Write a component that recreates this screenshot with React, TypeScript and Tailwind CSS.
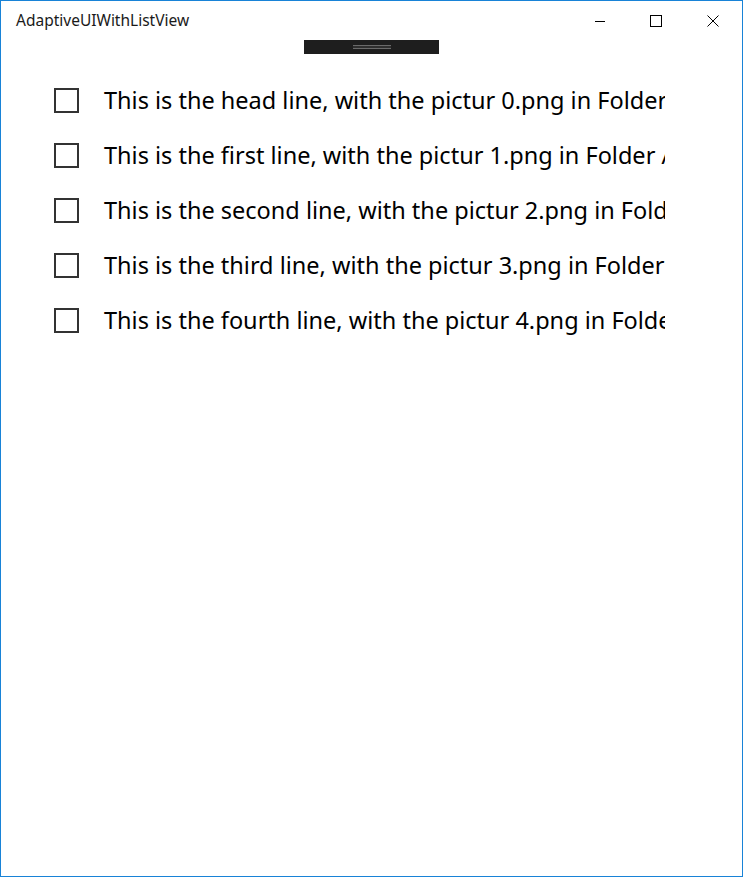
const rows = [
  "This is the head line, with the pictur 0.png in Folder Assets",
  "This is the first line, with the pictur 1.png in Folder Assets",
  "This is the second line, with the pictur 2.png in Folder Assets",
  "This is the third line, with the pictur 3.png in Folder Assets",
  "This is the fourth line, with the pictur 4.png in Folder Assets",
];

export default function App() {
  return (
    <div
      className="w-[743px] h-[877px] border border-[#1883d7] bg-white flex flex-col overflow-hidden"
      style={{ fontFamily: '"Noto Sans", "Open Sans", sans-serif' }}
    >
      {/* title bar */}
      <div className="h-[39px] flex items-center shrink-0">
        <span className="pl-[15px] text-[15.5px] text-[#1a1a1a] flex-1">AdaptiveUIWithListView</span>
        <div className="flex h-full">
          <button className="w-[56px] h-full flex items-center justify-center">
            <svg width="12" height="12" viewBox="0 0 12 12">
              <path d="M1 6.5h10" stroke="#000" strokeWidth="1" />
            </svg>
          </button>
          <button className="w-[56px] h-full flex items-center justify-center">
            <svg width="12" height="12" viewBox="0 0 12 12">
              <rect x="0.5" y="0.5" width="11" height="11" fill="none" stroke="#000" strokeWidth="1" />
            </svg>
          </button>
          <button className="w-[58px] h-full flex items-center justify-center">
            <svg width="12" height="12" viewBox="0 0 12 12">
              <path d="M0.5 0.5L11.5 11.5M11.5 0.5L0.5 11.5" stroke="#000" strokeWidth="1" />
            </svg>
          </button>
        </div>
      </div>

      {/* drag handle */}
      <div className="flex justify-center shrink-0">
        <div className="w-[135px] h-[14px] bg-[#1e1e1e] flex items-center justify-center">
          <div className="w-[38px] h-[4px] border-y border-[#6a6a6a] bg-[#2e2e2e]" />
        </div>
      </div>

      {/* list */}
      <div className="pl-[53px] pt-[19px] w-[664px] overflow-hidden">
        {rows.map((r) => (
          <div key={r} className="h-[55px] flex items-center gap-[25px] whitespace-nowrap">
            <div className="w-[25px] h-[25px] shrink-0 border-[2.5px] border-[#333333]" />
            <span className="text-[23.5px] text-black">{r}</span>
          </div>
        ))}
      </div>
    </div>
  );
}
